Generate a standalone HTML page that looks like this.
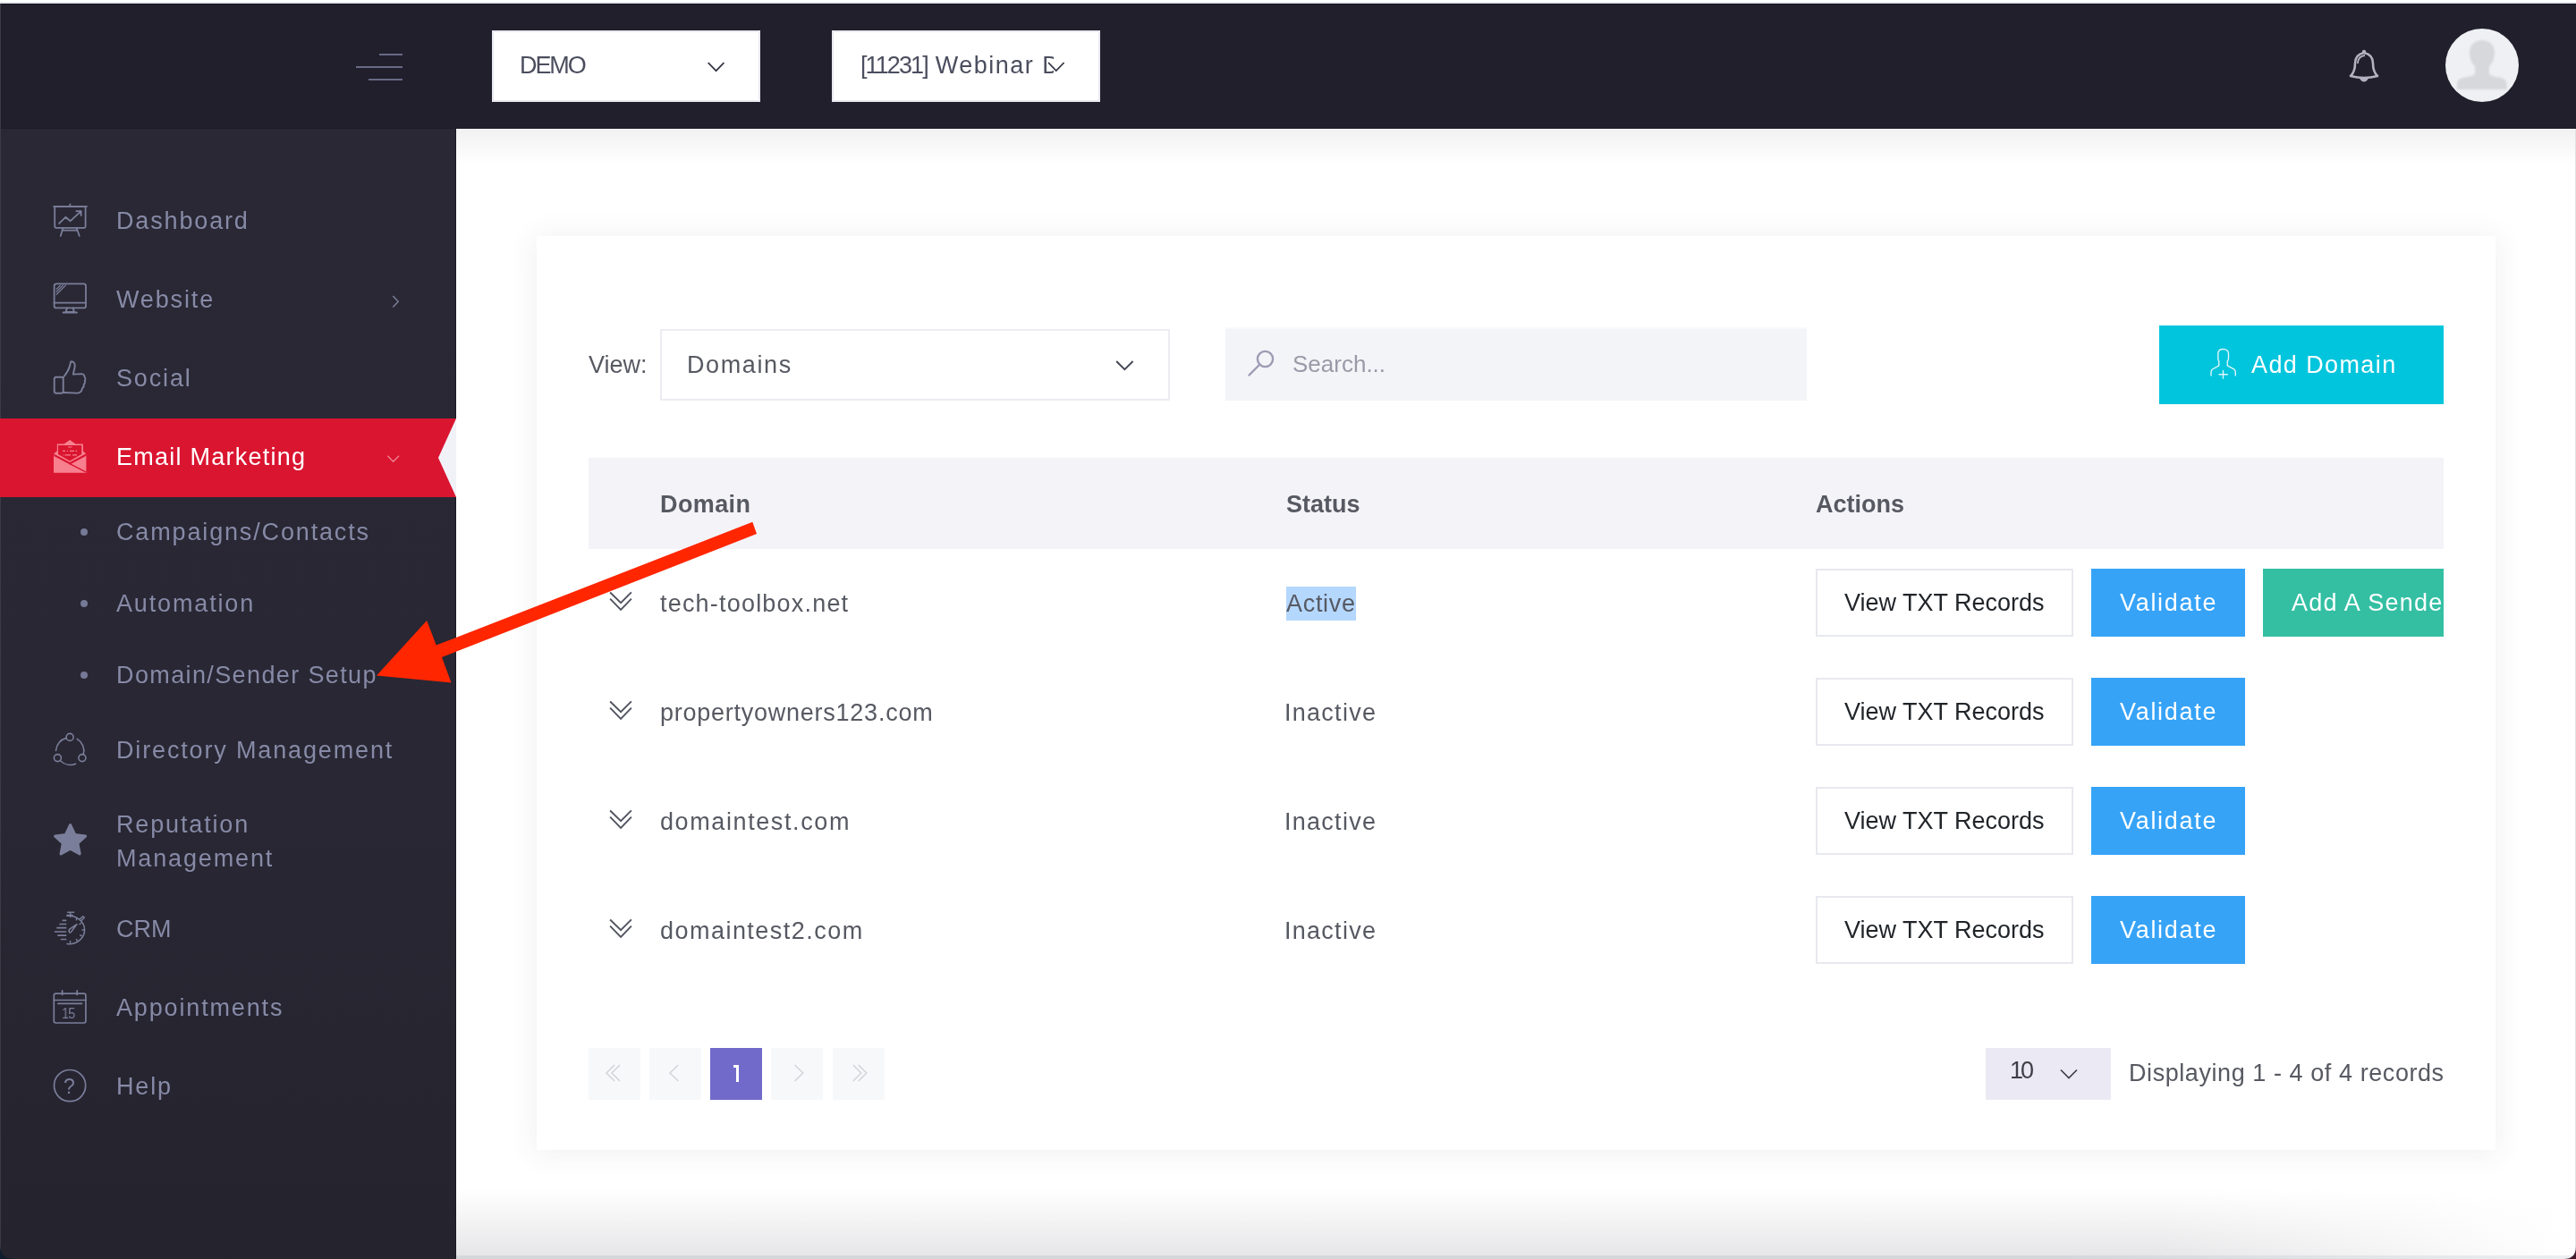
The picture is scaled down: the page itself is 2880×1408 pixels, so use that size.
<!DOCTYPE html>
<html><head><meta charset="utf-8">
<style>
*{margin:0;padding:0;box-sizing:border-box}
html,body{width:2880px;height:1408px;overflow:hidden;background:#fff;font-family:"Liberation Sans",sans-serif;-webkit-font-smoothing:antialiased}
.a{position:absolute}
.t{position:absolute;line-height:27px;font-size:27px;white-space:nowrap;margin-top:1px;will-change:transform}
#topline{left:0;top:0;width:2880px;height:4px;background:linear-gradient(#fff 0,#fff 1.7px,#d9dbdf 1.7px,#d9dbdf 2.5px,#e5e8eb 2.5px)}
#header{left:0;top:4px;width:2880px;height:140px;background:#201f2b;border-top:1px solid #15141f}
#side{left:0;top:144px;width:510px;height:1264px;background:linear-gradient(#292834,#282733 60%,#24232e)}
#content{left:510px;top:144px;width:2370px;height:1264px;background:#fff}
.hb{background:#686a86;height:2px}
.sel{background:#fff;border:2px solid #e9eaf1}
.sm{color:#878aa7;letter-spacing:1.85px;margin-top:1px}
.ic{position:absolute;left:60px;width:36px;height:36px}
.dk{color:#575962}
.card{left:600px;top:264px;width:2190px;height:1022px;background:#fff;box-shadow:0 2px 30px 2px rgba(69,65,78,0.08)}
.btn{position:absolute;height:76px}
.vtxt{border:2px solid #e8e9ef;background:#fff}
.val{background:#36a3f7}
.pg{position:absolute;top:1172px;width:58px;height:58px;background:#f7f8fa}
</style></head><body>
<div class="a" id="topline"></div>
<div class="a" id="header"></div>
<div class="a" id="side"></div>
<div class="a" id="content"></div>
<div class="a" style="left:510px;top:144px;width:2370px;height:40px;background:linear-gradient(#f1f1f2,rgba(255,255,255,0))"></div>
<div class="a" style="left:510px;top:1330px;width:2370px;height:74px;background:linear-gradient(rgba(255,255,255,0),#e6e6e8);-webkit-mask-image:linear-gradient(to right,#000 0,#000 1900px,rgba(0,0,0,0) 2370px)"></div>
<div class="a" style="left:510px;top:1404px;width:2370px;height:4px;background:linear-gradient(to right,#d6d7dd 0,#d6d7dd 1800px,#eceef3 2370px)"></div>
<div class="a" style="left:0;top:143px;width:2880px;height:1px;background:#1c1b25"></div>
<div class="a" style="left:509px;top:144px;width:1px;height:1264px;background:#1b1a22"></div>
<div class="a" style="left:0;top:4px;width:1px;height:1404px;background:#3c3b45"></div>
<div class="a" style="left:2879px;top:144px;width:1px;height:1264px;background:#e2e2e6"></div>


<!-- header -->
<div class="a hb" style="left:424px;top:60px;width:26px"></div>
<div class="a hb" style="left:398px;top:74px;width:52px"></div>
<div class="a hb" style="left:412px;top:88px;width:38px"></div>

<div class="a sel" style="left:550px;top:34px;width:300px;height:80px"></div>
<div class="t" style="left:581px;top:59px;color:#4b4e5e;letter-spacing:-2.1px">DEMO</div>
<svg class="a" style="left:789px;top:68px" width="24" height="14" viewBox="0 0 24 14"><path d="M2.7 2.2 L11.6 11.2 L20.4 2.2" fill="none" stroke="#363949" stroke-width="1.8"/></svg>

<div class="a sel" style="left:930px;top:34px;width:300px;height:80px;overflow:hidden"></div>
<div class="a" style="left:962px;top:50px;width:216px;height:50px;overflow:hidden"><div class="t" style="left:0;top:9px;color:#4b4e5e"><span style="letter-spacing:-1.9px">[11231]</span><span style="letter-spacing:1.5px"> Webinar D</span></div></div>
<svg class="a" style="left:1170px;top:68px" width="24" height="14" viewBox="0 0 24 14"><path d="M2 2 L10.8 11 L19.6 2" fill="none" stroke="#2d2f3d" stroke-width="1.7"/></svg>

<!-- bell -->
<svg class="a" style="left:2624px;top:53px" width="38" height="42" viewBox="0 0 38 42">
<path d="M4 32 Q9 27 9 18 Q9 8 19 6 Q29 8 29 18 Q29 27 34 32 Q19 36 4 32 Z" fill="none" stroke="#b4b2c0" stroke-width="2.6" stroke-linejoin="round"/>
<path d="M12 18 Q12 10 20 9" fill="none" stroke="#b4b2c0" stroke-width="1.8"/>
<circle cx="19" cy="5" r="2.2" fill="#b4b2c0"/>
<path d="M15 35 Q19 40 23 35" fill="#b4b2c0" stroke="#b4b2c0" stroke-width="2"/>
</svg>
<!-- avatar -->
<div class="a" style="left:2734px;top:32px;width:82px;height:82px;border-radius:50%;background:#eef0f3;overflow:hidden">
<svg class="a" style="left:0;top:0" width="82" height="82" viewBox="0 0 82 82"><defs><filter id="bl" x="-20%" y="-20%" width="140%" height="140%"><feGaussianBlur stdDeviation="1.3"/></filter></defs>
<path filter="url(#bl)" fill="#d6d8dc" d="M41 13 C49 13 55 18.5 55 27 C55 34 52.5 39 49 42 L49 51 C51 53 56 54 62 55 C66 56 68.5 58 68.5 62 V68 H13 V62 C13 58 15.5 56 19.5 55 C25.5 54 31 53 33 51 L33 42 C29.5 39 27 34 27 27 C27 18.5 33 13 41 13 Z"/>
</svg>
</div>

<!-- SIDEBAR -->
<div class="a" style="left:0;top:468px;width:510px;height:88px;background:#da1530"></div>
<svg class="a" style="left:488px;top:468px" width="22" height="88" viewBox="0 0 22 88"><path d="M22 0 L2 44 L22 88 Z" fill="#f1f2f7"/></svg>

<div class="t sm" style="left:130px;top:233px">Dashboard</div>
<div class="t sm" style="left:130px;top:321px">Website</div>
<div class="t sm" style="left:130px;top:409px">Social</div>
<div class="t" style="left:130px;top:497px;color:#fff;letter-spacing:1.25px">Email Marketing</div>
<div class="t sm" style="left:130px;top:581px">Campaigns/Contacts</div>
<div class="t sm" style="left:130px;top:661px">Automation</div>
<div class="t sm" style="left:130px;top:741px;letter-spacing:1.38px">Domain/Sender Setup</div>
<div class="t sm" style="left:130px;top:825px">Directory Management</div>
<div class="t sm" style="left:130px;top:908px">Reputation</div>
<div class="t sm" style="left:130px;top:946px">Management</div>
<div class="t sm" style="left:130px;top:1025px;letter-spacing:0px">CRM</div>
<div class="t sm" style="left:130px;top:1113px">Appointments</div>
<div class="t sm" style="left:130px;top:1201px">Help</div>

<!-- bullets -->
<div class="a" style="left:90px;top:591px;width:8px;height:8px;border-radius:50%;background:#777a96"></div>
<div class="a" style="left:90px;top:671px;width:8px;height:8px;border-radius:50%;background:#777a96"></div>
<div class="a" style="left:90px;top:751px;width:8px;height:8px;border-radius:50%;background:#777a96"></div>

<!-- chevrons sidebar -->
<svg class="a" style="left:436px;top:329px" width="12" height="18" viewBox="0 0 12 18"><path d="M3.3 2 L9.2 8.3 L3.3 14.4" fill="none" stroke="#7e819d" stroke-width="1.4"/></svg>
<svg class="a" style="left:431px;top:507px" width="18" height="12" viewBox="0 0 18 12"><path d="M2.4 2.8 L8.7 9.2 L15 2.8" fill="none" stroke="#ef8593" stroke-width="1.3"/></svg>


<!-- sidebar icons -->
<svg class="a" style="left:50px;top:220px" width="60" height="60" viewBox="0 0 60 60" fill="none" stroke="#7b7e9a" stroke-width="1.8" stroke-linecap="round" stroke-linejoin="round">
<rect x="11.2" y="10.8" width="34.4" height="24" rx="1.5"/><path d="M10 10.8 H47 M28.4 8.3 V10.8"/>
<path d="M20.5 34.8 L17.8 43.8 M35.6 34.8 L38.7 43.8 M20 37.6 H36"/>
<path d="M16.1 29.8 L23.3 22.8 L28.7 27.2 L40.6 16.1 M35.3 16.1 H40.6 V21"/>
</svg>
<svg class="a" style="left:50px;top:310px" width="60" height="60" viewBox="0 0 60 60" fill="none" stroke="#7b7e9a" stroke-width="1.8" stroke-linecap="round" stroke-linejoin="round">
<rect x="10.6" y="7.4" width="35.4" height="27" rx="2.5"/><path d="M10.6 28.7 H46"/>
<path d="M25 34.4 L23.5 38.9 H33 L31.5 34.4 M20.5 39.5 H36"/>
<path d="M13 13.5 L17.5 9 M13 16.5 L20.5 9 M13 19.5 L23.5 9" stroke-width="1.1"/>
</svg>
<svg class="a" style="left:50px;top:390px" width="60" height="60" viewBox="0 0 60 60" fill="none" stroke="#7b7e9a" stroke-width="1.9" stroke-linecap="round" stroke-linejoin="round">
<rect x="10.7" y="31.8" width="10" height="18" rx="2.2"/>
<path d="M20.7 32 C24.5 27.5 27.5 23 28.6 17 C28.6 15 29 14.3 30.2 14.3 C32.8 14.5 34.2 17 33.6 20.5 L31.8 28.6 L41.2 28.1 C43.4 28.2 44.6 29.8 44.5 31.6 C45.6 32.6 45.7 34.8 44.7 36 C45.3 37.2 44.8 39.2 43.6 40 C43.9 41.4 43.3 43.5 42 44.2 C41.5 47.5 39.5 49.5 36.5 49.6 L20.7 49"/>
</svg>
<svg class="a" style="left:50px;top:480px" width="60" height="60" viewBox="0 0 60 60">
<path d="M10 29 L28 38.5 L46.4 29 V48.8 H10 Z" fill="#f7808f"/>
<path d="M10 27.5 L13.8 24.5 V16.5 H21.6 L28.1 11.9 L34.4 16.5 H42.9 V24.5 L46 27.5 L28.1 37 Z" fill="#f7808f"/>
<path d="M15 18 H41.2 V28 L28.1 35.5 L15 28 Z" fill="#da1530"/>
<path d="M10.5 29.5 L28.5 38.8 L46 47.8" stroke="#da1530" stroke-width="1.4" fill="none"/>
<path d="M27.5 39.2 L46 29.2" stroke="#da1530" stroke-width="1.4" fill="none"/>
<path d="M26 20 H30.5 M20 24.3 H23 M25 24.3 H26 M28 24.3 H33 M34.5 24.3 H36 M20.5 28.8 H21.2 M22.5 28.8 H29 M31 28.8 H36" stroke="#f7808f" stroke-width="1.2" fill="none"/>
</svg>
<svg class="a" style="left:50px;top:810px" width="60" height="60" viewBox="0 0 60 60" fill="none" stroke="#7b7e9a" stroke-width="1.6" stroke-linecap="round">
<circle cx="28.1" cy="14.4" r="4"/><circle cx="14.4" cy="37.6" r="4"/><circle cx="41.9" cy="37.6" r="4"/>
<path d="M24.2 15.4 A15.6 15.6 0 0 0 12.5 29.5"/>
<path d="M17.6 40.8 A15.6 15.6 0 0 0 34.5 44.2"/>
<path d="M36.2 16.4 A15.6 15.6 0 0 1 43.3 33.7"/>
</svg>
<svg class="a" style="left:50px;top:910px" width="60" height="60" viewBox="0 0 60 60"><path d="M28.60 12.70 L33.65 23.54 L45.53 25.00 L36.78 33.16 L39.06 44.90 L28.60 39.10 L18.14 44.90 L20.42 33.16 L11.67 25.00 L23.55 23.54 Z" fill="#7b7e9a" stroke="#7b7e9a" stroke-width="3.2" stroke-linejoin="round"/></svg>
<svg class="a" style="left:50px;top:1010px" width="60" height="60" viewBox="0 0 60 60" fill="none" stroke="#7b7e9a" stroke-width="1.5" stroke-linecap="round" stroke-linejoin="round">
<path d="M25 14.3 C35 13 44.6 20.5 44.6 30 C44.6 39.5 35 47 25 45.5"/>
<path d="M25.6 10.3 H32.6 M28.6 10.5 V15.5 M25 13.5 H31"/>
<path d="M39.5 17.8 L42.8 14.8 L44.3 16.3 L41.2 19.3"/>
<path d="M36 17 L35.3 18.8 M40.5 22.5 L39 23.5 M43.5 30 L42 30 M41 36.5 L39.8 35.8 M36.2 42 L35.5 40.5 M28.5 44.2 L28.5 42.5"/>
<path d="M27.6 32.7 C26.5 31 27 29.8 28.5 28.7 L35.9 23.7 L30.8 30.5 C29.8 32 28.6 33.7 27.6 32.7 Z"/>
<path d="M20.3 19.3 H23.6 M17 23.5 H23.6 M14 27.7 H23.6 M11.5 32 H23.6 M15 36.2 H23.6 M18.6 40.5 H23.6" stroke-width="1.7"/>
</svg>
<svg class="a" style="left:50px;top:1100px" width="60" height="60" viewBox="0 0 60 60" fill="none" stroke="#7b7e9a" stroke-width="1.7" stroke-linecap="round" stroke-linejoin="round">
<rect x="10.3" y="11.2" width="35.6" height="32.8" rx="2.2"/><path d="M10.3 18.5 H45.9 M19.6 7.8 V12.5 M36.2 7.8 V12.5 M14.8 22.3 H41.6"/>
</svg>
<div class="t" style="left:69px;top:1125px;font-size:16px;line-height:16px;color:#7b7e9a;letter-spacing:-0.8px;transform:scaleX(0.9);transform-origin:left">15</div>
<svg class="a" style="left:50px;top:1190px" width="60" height="60" viewBox="0 0 60 60" fill="none" stroke="#7b7e9a" stroke-width="1.7">
<circle cx="28.1" cy="24.1" r="17.6"/>
</svg>
<div class="t" style="left:71px;top:1203px;font-size:23px;line-height:23px;color:#7b7e9a">?</div>

<!-- CONTENT -->
<div class="a card"></div>


<!-- toolbar -->
<div class="t dk" style="left:658px;top:394px">View:</div>
<div class="a" style="left:738px;top:368px;width:570px;height:80px;border:2px solid #ebedf2;background:#fff"></div>
<div class="t dk" style="left:768px;top:394px;letter-spacing:1.6px">Domains</div>
<svg class="a" style="left:1246px;top:402px" width="24" height="14" viewBox="0 0 24 14"><path d="M2.2 2 L11.4 11.2 L20.6 2" fill="none" stroke="#3f424f" stroke-width="1.8"/></svg>

<div class="a" style="left:1370px;top:366px;width:650px;height:82px;background:#f3f4f8;border-top:2px solid #f8f9fb"></div>
<svg class="a" style="left:1390px;top:386px" width="40" height="40" viewBox="0 0 40 40" fill="none" stroke="#9d9bb4" stroke-width="2.4" stroke-linecap="round">
<circle cx="24.5" cy="15.5" r="8.6"/><path d="M18.5 21.5 L6.5 33.5"/>
</svg>
<div class="t" style="left:1445px;top:393px;font-size:26px;color:#9a99a7">Search...</div>

<div class="a" style="left:2414px;top:364px;width:318px;height:88px;background:#00c5dc"></div>
<svg class="a" style="left:2460px;top:380px" width="50" height="50" viewBox="0 0 50 50" fill="none" stroke="#dff6fa" stroke-width="1.4" stroke-linejoin="round">
<path d="M12 40.5 V36 C12 34.5 12.5 34 13.5 33 L20.8 28.8 V24 C20 23 19.8 22 19.8 21 V15.5 C19.8 12 22 10.5 25.5 10.5 C29 10.5 31.5 12.5 31.5 15.5 V21 C31.5 22 31 23 30.3 24 V28.8 L38 33.2 C39 34 39.3 34.8 39.3 36 V40.5"/>
<path d="M20.5 38.7 H30.8 M25.5 34 V43.7"/>
</svg>
<div class="t" style="left:2517px;top:394px;color:#fff;letter-spacing:1.4px">Add Domain</div>

<!-- table header -->
<div class="a" style="left:658px;top:512px;width:2074px;height:102px;background:#f4f3f8"></div>
<div class="t" style="left:738px;top:550px;font-weight:bold;color:#575962;letter-spacing:0.4px">Domain</div>
<div class="t" style="left:1438px;top:550px;font-weight:bold;color:#575962">Status</div>
<div class="t" style="left:2030px;top:550px;font-weight:bold;color:#575962">Actions</div>

<svg class="a" style="left:670px;top:650px" width="50" height="50" viewBox="0 0 50 50" fill="none" stroke="#50545f" stroke-width="1.9"><path d="M12.1 12.5 L24.1 24.2 L35.9 12.3 M12.1 19.7 L24.1 31.8 L35.9 19.7"/></svg>
<div class="t dk" style="left:738px;top:661px;letter-spacing:1.2px">tech-toolbox.net</div>
<div class="a" style="left:1438px;top:656px;width:78px;height:38px;background:#b4d7fe"></div>
<div class="t dk" style="left:1438px;top:661px;letter-spacing:0.7px">Active</div>
<div class="btn vtxt" style="left:2030px;top:636px;width:288px"></div>
<div class="t" style="left:2062px;top:660px;color:#212529">View TXT Records</div>
<div class="btn val" style="left:2338px;top:636px;width:172px"></div>
<div class="t" style="left:2370px;top:660px;color:#fff;letter-spacing:1.7px">Validate</div>
<div class="a" style="left:2530px;top:636px;width:202px;height:76px;background:#34bfa3;overflow:hidden"><div class="t" style="left:32px;top:24px;color:#fff;letter-spacing:1.2px">Add A Sender</div></div>
<svg class="a" style="left:670px;top:772px" width="50" height="50" viewBox="0 0 50 50" fill="none" stroke="#50545f" stroke-width="1.9"><path d="M12.1 12.5 L24.1 24.2 L35.9 12.3 M12.1 19.7 L24.1 31.8 L35.9 19.7"/></svg>
<div class="t dk" style="left:738px;top:783px;letter-spacing:0.75px">propertyowners123.com</div>
<div class="t dk" style="left:1436px;top:783px;letter-spacing:1.27px">Inactive</div>
<div class="btn vtxt" style="left:2030px;top:758px;width:288px"></div>
<div class="t" style="left:2062px;top:782px;color:#212529">View TXT Records</div>
<div class="btn val" style="left:2338px;top:758px;width:172px"></div>
<div class="t" style="left:2370px;top:782px;color:#fff;letter-spacing:1.7px">Validate</div>
<svg class="a" style="left:670px;top:894px" width="50" height="50" viewBox="0 0 50 50" fill="none" stroke="#50545f" stroke-width="1.9"><path d="M12.1 12.5 L24.1 24.2 L35.9 12.3 M12.1 19.7 L24.1 31.8 L35.9 19.7"/></svg>
<div class="t dk" style="left:738px;top:905px;letter-spacing:1.6px">domaintest.com</div>
<div class="t dk" style="left:1436px;top:905px;letter-spacing:1.27px">Inactive</div>
<div class="btn vtxt" style="left:2030px;top:880px;width:288px"></div>
<div class="t" style="left:2062px;top:904px;color:#212529">View TXT Records</div>
<div class="btn val" style="left:2338px;top:880px;width:172px"></div>
<div class="t" style="left:2370px;top:904px;color:#fff;letter-spacing:1.7px">Validate</div>
<svg class="a" style="left:670px;top:1016px" width="50" height="50" viewBox="0 0 50 50" fill="none" stroke="#50545f" stroke-width="1.9"><path d="M12.1 12.5 L24.1 24.2 L35.9 12.3 M12.1 19.7 L24.1 31.8 L35.9 19.7"/></svg>
<div class="t dk" style="left:738px;top:1027px;letter-spacing:1.47px">domaintest2.com</div>
<div class="t dk" style="left:1436px;top:1027px;letter-spacing:1.27px">Inactive</div>
<div class="btn vtxt" style="left:2030px;top:1002px;width:288px"></div>
<div class="t" style="left:2062px;top:1026px;color:#212529">View TXT Records</div>
<div class="btn val" style="left:2338px;top:1002px;width:172px"></div>
<div class="t" style="left:2370px;top:1026px;color:#fff;letter-spacing:1.7px">Validate</div>
<!-- pagination -->
<div class="pg" style="left:658px"></div>
<div class="pg" style="left:726px"></div>
<div class="pg" style="left:794px;background:#716aca"></div>
<div class="pg" style="left:862px"></div>
<div class="pg" style="left:931px"></div>
<svg class="a" style="left:658px;top:1172px" width="334" height="58" viewBox="0 0 334 58" fill="none" stroke="#d3d4d8" stroke-width="1.5">
<path d="M29 19 L20 28 L29 37 M35 19 L26 28 L35 37"/>
<path d="M100.3 19 L91 28 L100.3 37"/>
<path d="M230.5 19 L239.8 28 L230.5 37"/>
<path d="M295.8 19 L304.8 28 L295.8 37 M301.8 19 L310.8 28 L301.8 37"/>
</svg>
<div class="a" style="left:823px;top:1191px;width:3px;height:19px;background:#fff"></div>
<div class="a" style="left:820px;top:1191px;width:4px;height:2.5px;background:#fff"></div>

<div class="a" style="left:2220px;top:1172px;width:140px;height:58px;background:#ebe9f3"></div>
<div class="t" style="left:2247px;top:1183px;color:#3f4047;letter-spacing:-3px">10</div>
<svg class="a" style="left:2302px;top:1195px" width="24" height="14" viewBox="0 0 24 14"><path d="M2 1.5 L11 10.5 L20 1.5" fill="none" stroke="#3f4047" stroke-width="1.7"/></svg>
<div class="t dk" style="left:2380px;top:1186px;letter-spacing:0.57px">Displaying 1 - 4 of 4 records</div>

<!-- arrow -->
<svg class="a" style="left:0;top:0" width="2880" height="1408" viewBox="0 0 2880 1408">
<path d="M841.3 583.8 L846 597 L494 735 L504.5 763.6 L421 755.4 L477.2 694 L487.7 721.6 Z" fill="#ff2600"/>
</svg>

<svg class="a" style="left:0;top:1392px" width="16" height="16" viewBox="0 0 16 16"><path d="M0 0 Q0 16 16 16 H0 Z" fill="#0f1c2e"/></svg>
<svg class="a" style="left:2866px;top:1394px" width="14" height="14" viewBox="0 0 14 14"><path d="M14 0 Q14 14 0 14 H14 Z" fill="#3f1b2c"/></svg>
</body></html>
